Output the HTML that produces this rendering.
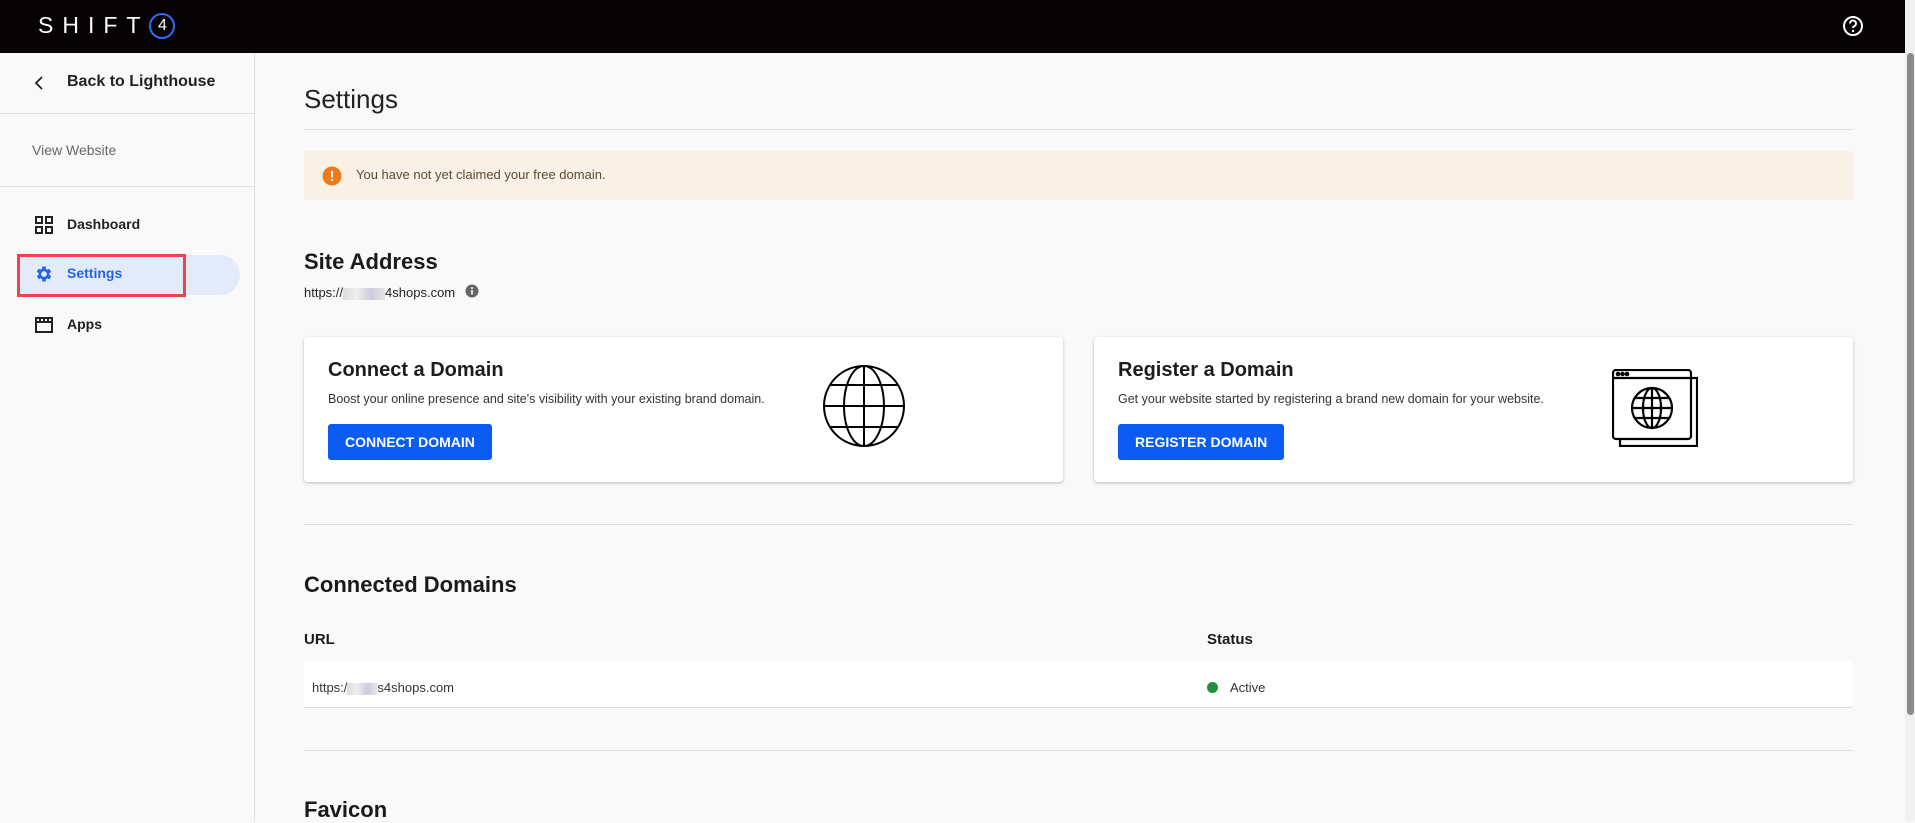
<!DOCTYPE html>
<html><head><meta charset="utf-8"><style>
*{box-sizing:border-box;margin:0;padding:0}
body{width:1915px;height:821px;overflow:hidden;background:#f9f9f9;font-family:"Liberation Sans",sans-serif;color:#1a1a1a;position:relative}
.top{position:absolute;left:0;top:0;width:1915px;height:53px;background:#070203}
.logo{position:absolute;left:38px;top:12px;color:#fff;font-size:23px;letter-spacing:9px;font-weight:400}
.side{position:absolute;left:0;top:53px;width:255px;height:768px;background:#f9f9f9;border-right:1px solid #e0e0e0}
.hr{position:absolute;height:1px;background:#e0e0e0}
.abs{position:absolute}
.card{position:absolute;top:337px;width:759px;height:145px;background:#fff;border-radius:4px;box-shadow:0 1px 3px rgba(0,0,0,.25)}
.card h3{position:absolute;left:24px;top:22px;font-size:20px;font-weight:600;color:#1d1d1d}
.card p{position:absolute;left:24px;top:55px;font-size:12.5px;color:#333}
.btn{position:absolute;left:24px;top:87px;height:36px;background:#0c5cf4;color:#fff;border-radius:3px;font-size:14px;font-weight:700;line-height:36px;padding:0 17px}
.blur{display:inline-block;width:42px;height:12px;background:linear-gradient(90deg,#ddd,#eee,#ccd,#e5e5e5);vertical-align:middle}
.scroll{position:absolute;left:1905px;top:0;width:10px;height:821px;background:#f1f1f1}
</style></head><body>
<div class="top"><div class="logo">SHIFT<span style="display:inline-block;width:26px;height:26px;border:2px solid #2f6df6;border-radius:50%;font-size:16px;letter-spacing:0;text-align:center;line-height:22px;vertical-align:3px">4</span></div>
<svg class="abs" style="left:1842px;top:15px" width="22" height="22" viewBox="0 0 22 22"><circle cx="11" cy="11" r="9" fill="none" stroke="#fff" stroke-width="2"/><path d="M8 8.5a3 3 0 1 1 4 2.8c-.8.4-1 .9-1 1.7" fill="none" stroke="#fff" stroke-width="2"/><circle cx="11" cy="16" r="1.2" fill="#fff"/></svg>
</div>
<div class="side">
<svg class="abs" style="left:34px;top:23px" width="10" height="14" viewBox="0 0 10 14"><path d="M8 1L2 7l6 6" fill="none" stroke="#222" stroke-width="1.8"/></svg>
<div class="abs" style="left:67px;top:20px;font-size:16px;font-weight:700;color:#222">Back to Lighthouse</div>
<div class="hr" style="left:0;top:60px;width:255px"></div>
<div class="abs" style="left:32px;top:89px;font-size:14px;color:#666">View Website</div>
<div class="hr" style="left:0;top:133px;width:255px"></div>
<svg class="abs" style="left:35px;top:163px" width="18" height="18" viewBox="0 0 18 18" fill="none" stroke="#222" stroke-width="2"><rect x="1" y="1" width="6" height="6"/><rect x="11" y="1" width="6" height="6"/><rect x="1" y="11" width="6" height="6"/><rect x="11" y="11" width="6" height="6"/></svg>
<div class="abs" style="left:67px;top:163px;font-size:14px;font-weight:700;color:#222">Dashboard</div>
<div class="abs" style="left:17px;top:202px;width:223px;height:40px;background:#e3eafa;border-radius:0 20px 20px 0"></div>
<div class="abs" style="left:17px;top:201px;width:169px;height:43px;border:3px solid #f2434a"></div>
<svg class="abs" style="left:34px;top:211px" width="20" height="20" viewBox="0 0 24 24"><path fill="#2563eb" d="M19.4 13a7.5 7.5 0 0 0 0-2l2.1-1.6-2-3.5-2.5 1a7 7 0 0 0-1.7-1L15 3h-4l-.4 2.7a7 7 0 0 0-1.7 1l-2.5-1-2 3.5L6.6 11a7.5 7.5 0 0 0 0 2l-2.1 1.6 2 3.5 2.5-1a7 7 0 0 0 1.7 1L11 21h4l.4-2.7a7 7 0 0 0 1.7-1l2.5 1 2-3.5zM13 15.5a3.5 3.5 0 1 1 0-7 3.5 3.5 0 0 1 0 7z" transform="translate(-1 0)"/></svg>
<div class="abs" style="left:67px;top:212px;font-size:14px;font-weight:700;color:#2563eb">Settings</div>
<svg class="abs" style="left:34px;top:262px" width="20" height="18" viewBox="0 0 20 18" fill="none" stroke="#222" stroke-width="2"><rect x="2" y="7" width="16" height="10"/><path d="M2 7V3h16v4M6 3v4M10 3v4M14 3v4"/></svg>
<div class="abs" style="left:67px;top:263px;font-size:14px;font-weight:700;color:#222">Apps</div>
</div>
<div class="abs" style="left:304px;top:84px;font-size:26px;color:#222">Settings</div>
<div class="hr" style="left:304px;top:129px;width:1549px"></div>
<div class="abs" style="left:304px;top:151px;width:1549px;height:49px;background:#faf1e6;border-radius:3px"></div>
<svg class="abs" style="left:322px;top:166px" width="20" height="20" viewBox="0 0 20 20"><circle cx="10" cy="10" r="9.5" fill="#f07a1a"/><rect x="9" y="5" width="2" height="6.5" fill="#fff"/><rect x="9" y="13" width="2" height="2" fill="#fff"/></svg>
<div class="abs" style="left:356px;top:167px;font-size:13px;color:#5b4a2e">You have not yet claimed your free domain.</div>
<div class="abs" style="left:304px;top:249px;font-size:22px;font-weight:700;color:#1a1a1a">Site Address</div>
<div class="abs" style="left:304px;top:284px;font-size:13px;color:#222">https://<span class="blur"></span>4shops.com <svg width="14" height="14" viewBox="0 0 14 14" style="vertical-align:-1px;margin-left:6px"><circle cx="7" cy="7" r="6.5" fill="#666"/><rect x="6.2" y="6" width="1.6" height="4.5" fill="#fff"/><circle cx="7" cy="4" r="1" fill="#fff"/></svg></div>
<div class="card" style="left:304px"><h3>Connect a Domain</h3><p>Boost your online presence and site's visibility with your existing brand domain.</p><div class="btn">CONNECT DOMAIN</div>
<svg class="abs" style="left:518px;top:27px" width="84" height="84" viewBox="0 0 84 84" fill="none" stroke="#000" stroke-width="2"><circle cx="42" cy="42" r="40"/><ellipse cx="42" cy="42" rx="20" ry="40"/><path d="M42 2v80M2 42h80M8 21h68M8 63h68"/></svg></div>
<div class="card" style="left:1094px"><h3>Register a Domain</h3><p>Get your website started by registering a brand new domain for your website.</p><div class="btn">REGISTER DOMAIN</div>
<svg class="abs" style="left:518px;top:32px" width="86" height="78" viewBox="0 0 86 78" fill="none" stroke="#000" stroke-width="2.2"><rect x="1" y="1" width="78" height="69" rx="3"/><path d="M79 9h6v68H8v-7M1 9h78"/><circle cx="6" cy="5" r="1.2" fill="#000"/><circle cx="10.5" cy="5" r="1.2" fill="#000"/><circle cx="15" cy="5" r="1.2" fill="#000"/><circle cx="40" cy="39" r="20"/><ellipse cx="40" cy="39" rx="9" ry="20"/><path d="M40 19v40M20 39h40M23 29h34M23 49h34"/></svg></div>
<div class="hr" style="left:304px;top:524px;width:1549px"></div>
<div class="abs" style="left:304px;top:572px;font-size:22px;font-weight:700">Connected Domains</div>
<div class="abs" style="left:304px;top:631px;font-size:15px;font-weight:700">URL</div>
<div class="abs" style="left:1207px;top:631px;font-size:15px;font-weight:700">Status</div>
<div class="abs" style="left:304px;top:661px;width:1549px;height:47px;background:#fff;border-bottom:1px solid #ddd"></div>
<div class="abs" style="left:312px;top:680px;font-size:13px;color:#333">https:/<span class="blur" style="width:30px"></span>s4shops.com</div>
<div class="abs" style="left:1207px;top:682px;width:11px;height:11px;border-radius:50%;background:#21903c"></div>
<div class="abs" style="left:1230px;top:680px;font-size:13px;color:#333">Active</div>
<div class="hr" style="left:304px;top:750px;width:1549px"></div>
<div class="abs" style="left:304px;top:797px;font-size:22px;font-weight:700">Favicon</div>
<div class="scroll"><div style="position:absolute;left:2px;top:53px;width:7px;height:662px;background:#8a8a8a;border-radius:4px"></div></div>
</body></html>
